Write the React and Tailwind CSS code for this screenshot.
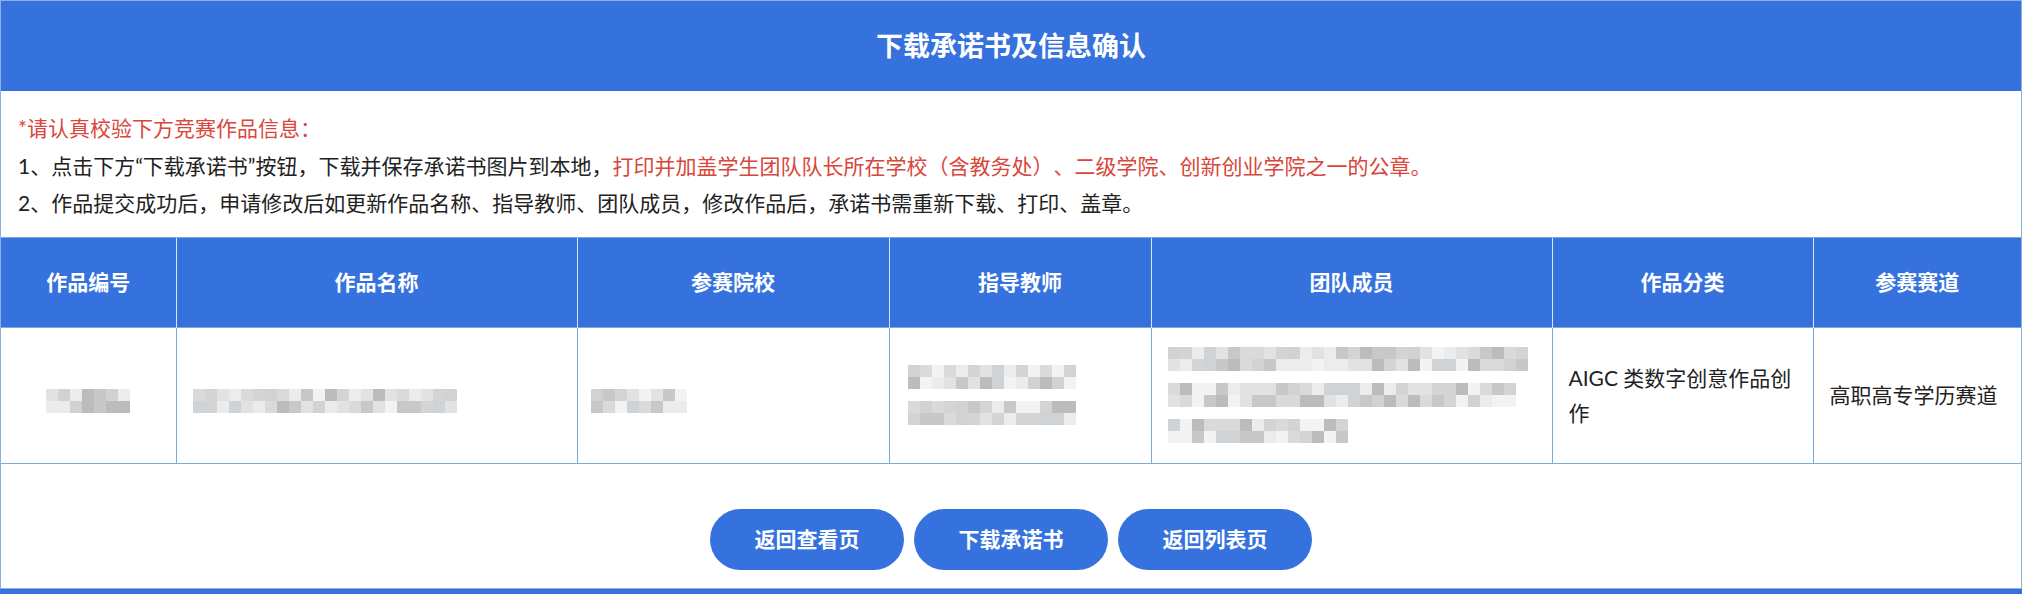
import React from 'react';

const shades = [
  'bg-[#d4d4d4]',
  'bg-[#e2e2e2]',
  'bg-[#c8c8c8]',
  'bg-[#ececec]',
  'bg-[#dadada]',
  'bg-[#bcbcbc]',
  'bg-[#f3f3f3]',
  'bg-[#cfd3d6]',
];

// pixelated placeholder for the blurred-out personal data
const Mosaic = ({ cols, rows = 2, seed = 1 }) => {
  let s = seed * 9301 + 49297;
  const next = () => {
    s = (s * 9301 + 49297) % 233280;
    return Math.floor((s / 233280) * shades.length);
  };
  return (
    <div className="inline-flex flex-col">
      {Array.from({ length: rows }).map((_, r) => (
        <div key={r} className="flex">
          {Array.from({ length: cols }).map((_, c) => (
            <div key={c} className={`w-[12px] h-[12px] ${shades[next()]}`} />
          ))}
        </div>
      ))}
    </div>
  );
};

const columns = [
  { title: '作品编号', width: 'w-[175px]' },
  { title: '作品名称', width: 'w-[401px]' },
  { title: '参赛院校', width: 'w-[312px]' },
  { title: '指导教师', width: 'w-[262px]' },
  { title: '团队成员', width: 'w-[401px]' },
  { title: '作品分类', width: 'w-[261px]' },
  { title: '参赛赛道', width: 'w-[208px]' },
];

const buttons = ['返回查看页', '下载承诺书', '返回列表页'];

export default function App() {
  return (
    <div className="min-h-screen bg-white font-['Lato','Noto_Sans_CJK_SC',sans-serif] text-[#222] [text-spacing-trim:space-all]">
      <div className="border-x border-t border-[#8db2de]">
        {/* Title bar */}
        <div className="h-[90px] bg-[#3572de] flex items-center justify-center text-white text-[27px] font-bold">
          下载承诺书及信息确认
        </div>

        {/* Notes */}
        <div className="px-[17px] pt-[18px] pb-[15px] text-[21px] leading-[37.5px]">
          <p className="text-[#d9463b]">*请认真校验下方竞赛作品信息：</p>
          <p>
            1、点击下方“下载承诺书”按钮，下载并保存承诺书图片到本地，
            <span className="text-[#d9463b]">打印并加盖学生团队队长所在学校（含教务处）、二级学院、创新创业学院之一的公章。</span>
          </p>
          <p>2、作品提交成功后，申请修改后如更新作品名称、指导教师、团队成员，修改作品后，承诺书需重新下载、打印、盖章。</p>
        </div>

        {/* Info table */}
        <table className="w-full table-fixed border-collapse text-[21px]">
          <colgroup>
            {columns.map((col) => (
              <col key={col.title} className={col.width} />
            ))}
          </colgroup>
          <thead>
            <tr className="h-[90px] bg-[#3572de] text-white">
              {columns.map((col, i) => (
                <th
                  key={col.title}
                  className={`font-bold text-center border-t border-[#7ea8da] ${i > 0 ? 'border-l border-l-[#dbe7f7]' : ''}`}
                >
                  {col.title}
                </th>
              ))}
            </tr>
          </thead>
          <tbody>
            <tr className="h-[136px]">
              <td className="border border-[#7ea8da] border-l-0 text-center align-middle">
                <Mosaic cols={7} seed={3} />
              </td>
              <td className="border border-[#7ea8da] px-4 align-middle">
                <Mosaic cols={22} seed={7} />
              </td>
              <td className="border border-[#7ea8da] px-[13px] align-middle">
                <Mosaic cols={8} seed={11} />
              </td>
              <td className="border border-[#7ea8da] px-[18px] align-middle">
                <div className="flex flex-col gap-[12px]">
                  <Mosaic cols={14} seed={5} />
                  <Mosaic cols={14} seed={13} />
                </div>
              </td>
              <td className="border border-[#7ea8da] px-4 align-middle">
                <div className="flex flex-col gap-[12px]">
                  <Mosaic cols={30} seed={17} />
                  <Mosaic cols={29} seed={19} />
                  <Mosaic cols={15} seed={23} />
                </div>
              </td>
              <td className="border border-[#7ea8da] px-4 leading-[35px] align-middle">
                AIGC 类数字创意作品创作
              </td>
              <td className="border border-[#7ea8da] border-r-0 px-4 align-middle">
                高职高专学历赛道
              </td>
            </tr>
          </tbody>
        </table>

        {/* Actions */}
        <div className="flex justify-center gap-[10px] pt-[45px] pb-[18px]">
          {buttons.map((label) => (
            <button
              key={label}
              className="h-[61px] w-[194px] rounded-full bg-[#3572de] text-white text-[21px] font-bold"
            >
              {label}
            </button>
          ))}
        </div>
      </div>
      <div className="h-[8px] bg-[#3572de] border-t border-[#8db2de]" />
    </div>
  );
}
